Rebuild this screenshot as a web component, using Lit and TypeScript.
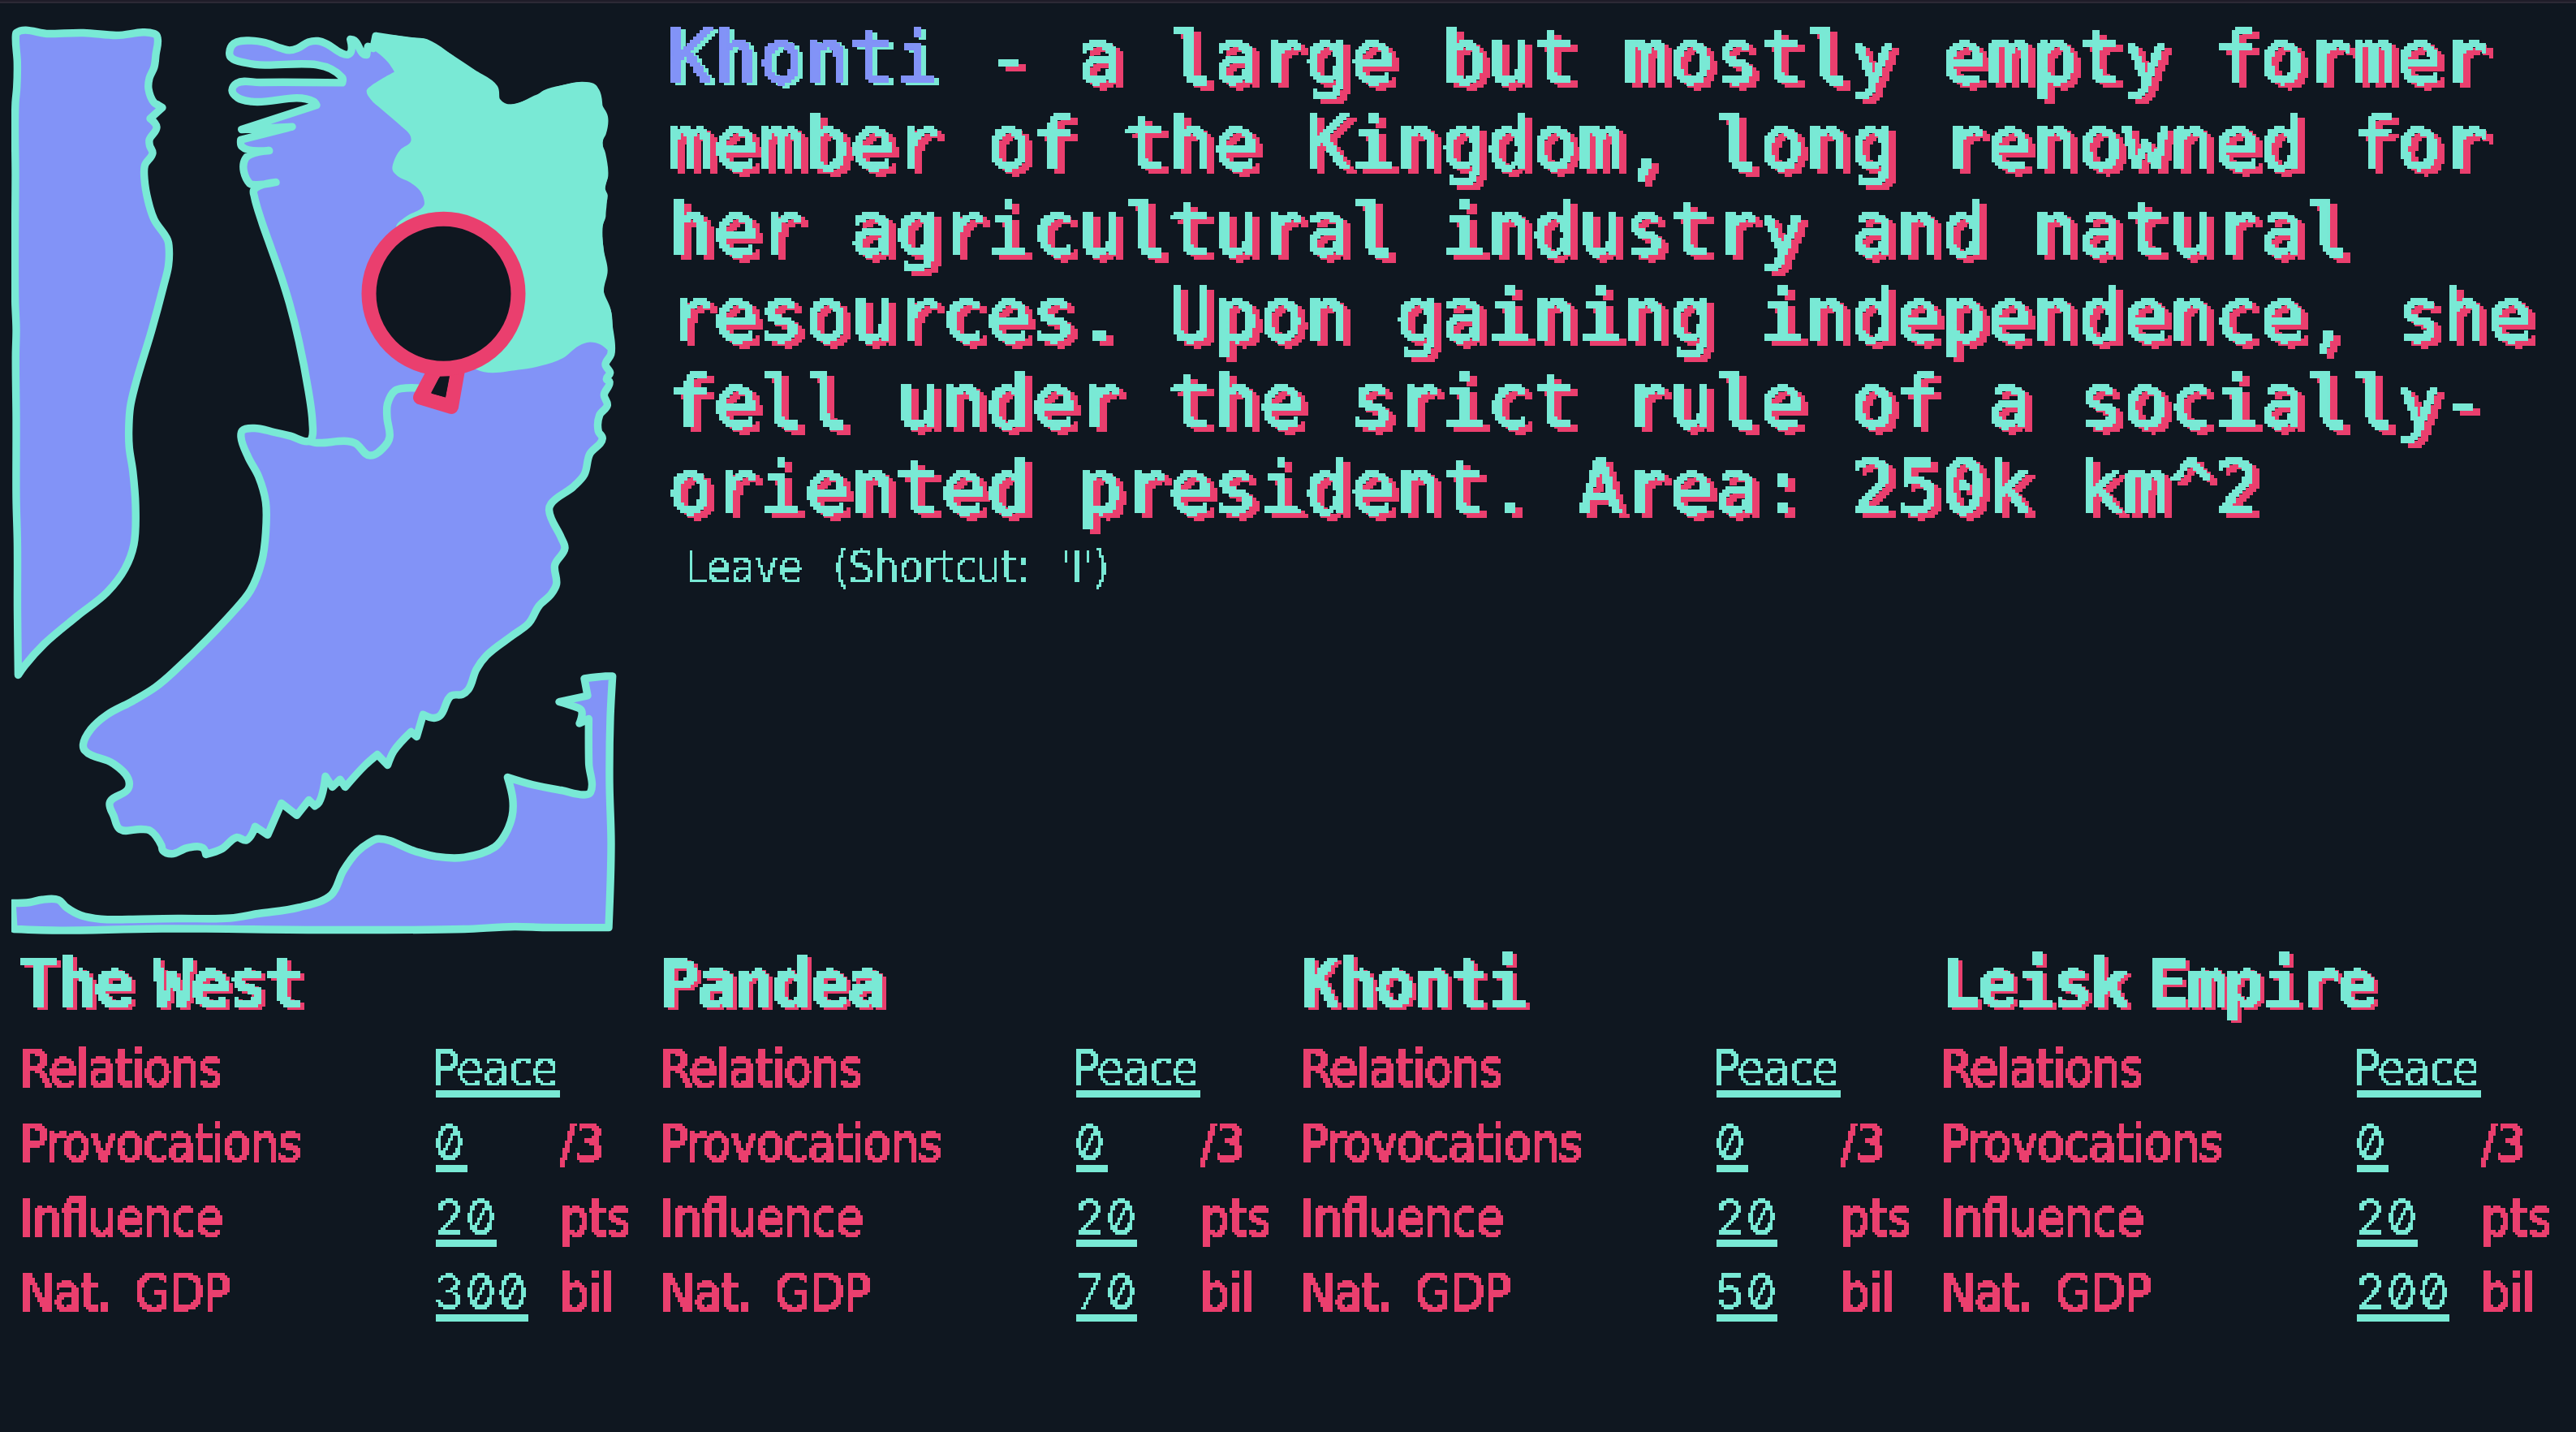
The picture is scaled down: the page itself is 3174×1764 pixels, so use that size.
import { LitElement, html, css, svg } from "lit";
import { customElement, property } from "lit/decorators.js";

type Pt = [number, number];

const parse = (s: string): Pt[] => s.trim().split(/\s+/).map((p) => p.split(",").map(Number) as Pt);

/* Smooth curve through the points; tangents vanish where the outline turns back on itself. */
function curve(source: string, closed: boolean): string {
  const p = parse(source);
  const n = p.length;
  const at = (i: number): Pt => (closed ? p[(i + n) % n] : p[Math.max(0, Math.min(n - 1, i))]);
  const tangent = (i: number): Pt => {
    const [a, b, c] = [at(i - 1), at(i), at(i + 1)];
    const u: Pt = [b[0] - a[0], b[1] - a[1]];
    const v: Pt = [c[0] - b[0], c[1] - b[1]];
    const lu = Math.hypot(...u);
    const lv = Math.hypot(...v);
    if (!lu || !lv) return [0, 0];
    const cos = (u[0] * v[0] + u[1] * v[1]) / (lu * lv);
    if (cos < 0.1) return [0, 0];
    const d: Pt = [u[0] / lu + v[0] / lv, u[1] / lu + v[1] / lv];
    const ld = Math.hypot(...d) || 1;
    return [d[0] / ld, d[1] / ld];
  };
  let out = `M${p[0][0]} ${p[0][1]}`;
  for (let i = 0; i < (closed ? n : n - 1); i++) {
    const a = at(i);
    const b = at(i + 1);
    const k = Math.hypot(b[0] - a[0], b[1] - a[1]) / 3;
    const ta = tangent(i);
    const tb = tangent(i + 1);
    const f = (x: number) => x.toFixed(1);
    out += `C${f(a[0] + ta[0] * k)} ${f(a[1] + ta[1] * k)} ${f(b[0] - tb[0] * k)} ${f(b[1] - tb[1] * k)} ${b[0]} ${b[1]}`;
  }
  return closed ? out + "Z" : out;
}

const WEST = curve(
  `20,40 60,41 103,40 143,43 190,41 193.5,44 192,67 190,82 184,96 183,109 190,126 195,129 200,132 185,145.5 193,156 184,172
   184.5,179 188,188 178.5,203 178,220 182.5,247 190,270 206.5,295 208,302 207.5,327 201.5,352 187,406 166.5,474.5 160.5,501
   158.7,528 159.3,551 163.7,580 167,622 165,670 154,700 132,729 94.5,759 54.7,792.5 30,820 22.4,831 21.5,752 21.4,668
   20,613.6 20,542 20,516 19.3,436 20,405 18.7,371 19,214 19,126 20.7,107 21.3,76.5 19.5,42`,
  true
);

const MAINLAND = curve(
  `288.3,53 310,49.6 326.7,52 346.7,59 356.7,61.4 366.7,59 380,51.4 391.7,50 403.3,54 420,64.6 428.3,66.8 432.3,63.6 431.7,47.9
   436.7,49.3 448.3,66.4 451.7,67 453.3,56.8 460,59 463,44 505,50 526,53 556,72 583,90 609,108 612,124 629,133 662,121 690,110
   726,106 734,112 740,140 744,145 738,175 744,216 741,232 743,240 741,266 738,278 739,308 743,332 739,358 748,382 750,400
   753.3,425 752.7,436 746,448.6 751.7,459 747.3,466.4 751,470 744.3,486 748.3,498.6 738.7,511 737.3,530.7 742.3,539.6
   726.6,559 720,584 706.5,599 679,620 676.6,628 691.5,662 696,674.7 683.6,695.7 685.6,719 679,731.5 664,746 651.7,767
   631.8,782 599.5,807 587,824 577,849 569.7,854.8 556,856.5 542.3,881 534.8,884 521.4,879.6 513.4,907 506.5,901 485,925
   477.6,942 465,929 450,942 425.4,969 419,959.6 409.5,969 401,955.8 393,988 388,992.4 380.6,985 365.7,1003.8 346.8,989
   329.9,1028 314.4,1017.7 303.5,1034.5 292,1031 273.6,1045 253.7,1052 250,1044 231,1044 211.4,1051.3 200.5,1047 199,1041
   185,1022.7 174,1021 147.8,1021 140.3,1005 135.3,988 158,971 158,958.8 139,939.8 104.5,924 102.5,916.7 112,897.7 131.8,880
   164,862.8 191.5,846 214,827 286,754.6 308.5,727 322.4,691.5 327.4,655.7 327.4,617.8 318.4,586 306,563 297,538 298.5,530
   313.4,527 338,532 358,536.6 380.6,543 384,539.6 385,520 380,480.7 368.3,420 356.7,373.6 347.3,343 331.7,298.6 323.3,275
   313.3,241 312.7,233.6 340,224 311.7,227 308,226 302.3,195 331.7,185 298,180 296.7,171.8 360,155.7 297.7,159 390,129
   386.7,124.6 310,124.6 293,120 286,111 291.7,102 320,101 421.7,101.4 421.7,95 303.3,77 285,70.7 282.7,64.6`,
  true
);

const HIGHLAND = curve(
  `463.3,39 470,43 481.7,42.5 505,45.7 526.7,48 538.3,56.8 558.3,68 566.7,78 583.3,85 595,95.7 608.3,103 613,109 614,122 620,127
   629,128 661.7,116.4 670,110.7 690,105 726.7,101 735,105 740,125 749,143 746.7,164.6 742,174.6 746,188 749.3,216.4 745.3,231.8
   748.7,239.6 746,255.7 746.3,266.4 742.3,277.9 744,307.5 748.7,332.5 744,357.5 746,370 752.3,380.7 754.7,398.6 753.3,421.8
   748.7,430.7 740,424 726.7,421 713.3,425.4 693.3,440.7 666.7,450 643.3,454.6 586.7,454.6 546,400 488,279 500,266.4 522.3,252.5
   522.3,245 516.7,233.6 505,224 490,216.4 483.7,209 484.7,200 493.3,184 506,174 505.7,167 493.3,154 470,134 456.7,121.8
   451.7,111 456.7,105.7 486,88 478.3,76.4 463.3,63 458,60`,
  true
);

const BORDER = curve(
  `380.6,543 390.5,545 428,543 437.8,545.5 456,560.6 475,548 480,538 477,514 477.5,497 486.7,480.7 500,477.5 520,478`,
  false
);

const SOUTH = curve(
  `15,1112 37,1111 52,1107.7 72,1108 82,1117.4 99.5,1127 124.4,1131.7 174,1131.7 219,1131 283.6,1130.5 318,1125 368,1117.4
   408,1101.9 423,1072 440,1049 455,1037.5 466,1032.8 512.4,1048.4 537.3,1054.7 572,1055.6 609.5,1043 622,1028 631,1005
   631.8,984 625.4,957 656.7,966.3 691.5,973 724,978 727.5,975.6 725.6,940 725.4,885 714,890.6 716.4,874.6 706.5,869.5 689,864 724,856.5
   720,835.4 746,832.5 754.7,832.5 752,883 751,963 753,1038.7 750,1142 671.6,1142 634,1141 572,1144 408,1145 199,1143.5
   75,1145.6 17,1144`,
  true
);

interface Nation {
  name: string;
  gdp: string;
}

const NATIONS: Nation[] = [
  { name: "The West", gdp: "300" },
  { name: "Pandea", gdp: "70" },
  { name: "Khonti", gdp: "50" },
  { name: "Leisk Empire", gdp: "200" },
];

const STORY = [
  "member of the Kingdom, long renowned for",
  "her agricultural industry and natural",
  "resources. Upon gaining independence, she",
  "fell under the srict rule of a socially-",
  "oriented president. Area: 250k km^2",
];

/* Samples the drawing once per cell and grows every sample into a square block. */
const pixelFilter = (id: string, cell: number, radius: number) => svg`
  <filter id=${id} x="-24" y="-24" width="2600" height="400" filterUnits="userSpaceOnUse" primitiveUnits="userSpaceOnUse" color-interpolation-filters="sRGB">
    <feFlood x="1" y="1" width="1" height="1" flood-color="#000" result="dot"/>
    <feComposite in="dot" in2="dot" operator="over" x="0" y="0" width=${cell} height=${cell}/>
    <feTile result="grid"/>
    <feComponentTransfer in="SourceGraphic" result="crisp"><feFuncA type="discrete" tableValues="0 1"/></feComponentTransfer>
    <feComposite in="crisp" in2="grid" operator="in"/>
    <feMorphology operator="dilate" radius=${radius}/>
  </filter>`;

@customElement("world-map")
export class WorldMap extends LitElement {
  static styles = css`
    :host { display: block; }
    .map { display: block; width: 780px; height: 1148px; overflow: visible; }
    .land { fill: #8293f7; stroke: #79e9d5; stroke-width: 9.4; stroke-linejoin: round; }
    .high { fill: #79e9d5; }
    .line { fill: none; stroke: #79e9d5; stroke-width: 9.5; }
    .mark { fill: #0f1720; stroke: #ea3f6e; stroke-width: 18; stroke-linejoin: round; }
    .hole { fill: #0f1720; }
  `;
  render() {
    return html`<svg class="map" viewBox="0 3.5 780 1148">
      <clipPath id="frame"><rect x="14" y="4" width="766" height="1148" /></clipPath>
      <g clip-path="url(#frame)">
        <path class="land" d=${WEST} />
        <path class="land" d=${MAINLAND} />
        <path class="line" d=${BORDER} />
        <path class="high" d=${HIGHLAND} />
        <path class="land" d=${SOUTH} />
      </g>
      <path class="mark" d="M535 457L518 489L556 500.5L564 455Z" />
      <circle class="mark" cx="546.5" cy="361.3" r="92" />
      <path class="hole" d="M542 463.3L554 462.7L549 488.7L531.7 484.3Z" />
    </svg>`;
  }
}

@customElement("nation-card")
export class NationCard extends LitElement {
  @property({ attribute: false }) nation!: Nation;

  static styles = css`
    :host { display: block; }
    .defs { display: block; width: 0; height: 0; position: absolute; }
    .name {
      margin: 0; padding-left: 1px; white-space: nowrap; color: #79e9d5;
      font: 700 82px/118px "DejaVu Sans Mono", monospace; letter-spacing: -3.1px; word-spacing: -20px;
      filter: url(#p4) drop-shadow(5px 3px 0 #ea3f6e);
    }
    .row { display: grid; grid-template-columns: 515px 150px 1fr; height: 92.2px; }
    .label, .unit {
      padding-left: 3px; white-space: nowrap; color: #ea3f6e; -webkit-text-stroke: 2.4px #ea3f6e;
      font: 62.5px/92px "DejaVu Sans Condensed", "DejaVu Sans", sans-serif; font-stretch: condensed;
      letter-spacing: -1.1px; word-spacing: 12px; filter: url(#p3);
    }
    .unit { letter-spacing: 0; }
    .value {
      justify-self: start; align-self: start; box-sizing: border-box; height: 81px; white-space: nowrap;
      border-bottom: 9px solid #79e9d5; color: #79e9d5; filter: url(#p3);
    }
    .word {
      padding-top: 19px; text-indent: -4px; letter-spacing: -1.1px;
      font: 60px/52px "DejaVu Sans Condensed", "DejaVu Sans", sans-serif; font-stretch: condensed;
    }
    .number {
      padding-top: 17px; text-indent: -3px; letter-spacing: 0.2px;
      font: 60px/54px Inter, "DejaVu Sans", sans-serif; font-feature-settings: "zero" 1, "tnum" 1;
    }
  `;

  private row(label: string, value: string, unit: string) {
    const word = /[a-z]/i.test(value);
    const width = [...value].reduce((sum, c) => sum + (/[a-z]/.test(c) ? 28.8 : 38.2), 0);
    return html`<div class="row">
      <span class="label">${label}</span>
      <span class="value ${word ? "word" : "number"}" style="width:${width}px">${value}</span>
      <span class="unit">${unit}</span>
    </div>`;
  }

  render() {
    return html`
      <svg class="defs">${pixelFilter("p3", 3, 1)}${pixelFilter("p4", 4, 2)}</svg>
      <h2 class="name">${this.nation.name}</h2>
      ${this.row("Relations", "Peace", "")}
      ${this.row("Provocations", "0", "/3")}
      ${this.row("Influence", "20", "pts")}
      ${this.row("Nat. GDP", this.nation.gdp, "bil")}
    `;
  }
}

@customElement("app-root")
export class AppRoot extends LitElement {
  static styles = css`
    :host { display: block; width: 100vw; height: 100vh; overflow: hidden; background: #0f1720; }
    .page { box-sizing: border-box; height: 100%; border-top: 2px solid #1f1d29; }
    .rule { height: 2px; background: #2c2935; }
    .top { display: flex; height: 1148.5px; }
    .map { flex: 0 0 823px; }
    .story { width: 2335px; padding-top: 14px; }
    .text {
      margin: 0; font: 90.5px/106px "DejaVu Sans Mono", monospace; letter-spacing: 1.56px; color: #79e9d5;
      white-space: pre; -webkit-text-stroke: 1.6px;
    }
    .line { display: block; filter: url(#p4) drop-shadow(9px 6px 0 #ea3f6e); }
    .first { display: flex; }
    .focus { color: #8293f7; filter: url(#p4) drop-shadow(6px 3px 0 #79e9d5); }
    .leave {
      display: block; padding: 0 0 0 21px; border: 0; background: none; color: #79e9d5; text-align: left;
      font: 55px/89px "DejaVu Sans Condensed", "DejaVu Sans", sans-serif; font-stretch: condensed;
      letter-spacing: -0.5px; word-spacing: 23px; filter: url(#p3);
    }
    .nations { display: grid; grid-template-columns: repeat(4, 789px); padding-left: 22px; }
    .defs { display: block; width: 0; height: 0; }
  `;
  render() {
    return html`<div class="page">
      <div class="rule"></div>
      <div class="top">
        <world-map class="map"></world-map>
        <div class="story">
          <p class="text"><span class="first"><span class="focus">Khonti</span><span class="line"> - a large but mostly empty former</span></span>${STORY.map((l) => html`<span class="line">${l}</span>`)}</p>
          <button class="leave">Leave (Shortcut: 'I')</button>
        </div>
      </div>
      <div class="nations">
        ${NATIONS.map((n) => html`<nation-card .nation=${n}></nation-card>`)}
      </div>
      <svg class="defs">${pixelFilter("p3", 3, 1)}${pixelFilter("p4", 4, 2)}</svg>
    </div>`;
  }
}
